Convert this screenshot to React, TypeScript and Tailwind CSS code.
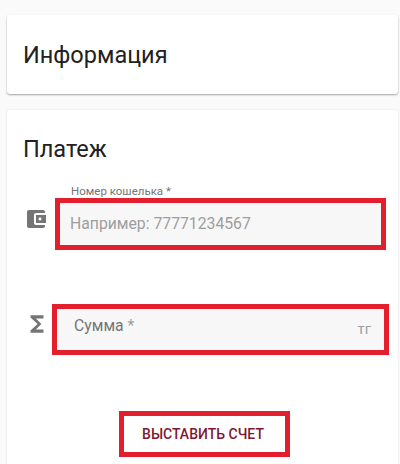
const font = { fontFamily: 'Roboto, sans-serif' }

function WalletIcon() {
  return (
    <svg viewBox="0 0 24 24" className="w-6 h-6 shrink-0 fill-[#757575]">
      <path d="M21 18v1c0 1.1-.9 2-2 2H5c-1.11 0-2-.9-2-2V5c0-1.1.89-2 2-2h14c1.1 0 2 .9 2 2v1h-9c-1.11 0-2 .9-2 2v8c0 1.1.89 2 2 2h9zm-9-2h10V8H12v8zm4-2.5c-.83 0-1.5-.67-1.5-1.5s.67-1.5 1.5-1.5 1.5.67 1.5 1.5-.67 1.5-1.5 1.5z" />
    </svg>
  )
}

function SigmaIcon() {
  return (
    <svg viewBox="0 0 24 24" className="w-[26px] h-[26px] shrink-0 fill-[#757575]">
      <path d="M18 4H6v2l6.5 6L6 18v2h12v-3h-7l5-5-5-5h7z" />
    </svg>
  )
}

export default function App() {
  return (
    <div className="h-[464px] overflow-hidden bg-[#fafafa] pl-[7px] pr-[2px] pt-[15px] flex flex-col gap-4" style={font}>
      <div className="h-[79px] shrink-0 bg-white rounded-[3px] shadow-[0_1px_2px_rgba(0,0,0,0.35)] pl-4 flex items-center">
        <h2 className="text-[23.5px] leading-8 text-[#212121]">Информация</h2>
      </div>
      <div className="flex-1 bg-white rounded-t-[3px] shadow-[0_0_2px_rgba(0,0,0,0.12)] pl-4 pt-[23px]">
        <h2 className="text-[23.5px] leading-8 text-[#212121]">Платеж</h2>

        <div className="mt-[19px] flex items-end">
          <div className="ml-px mr-[7px] mb-[19px]"><WalletIcon /></div>
          <div>
            <div className="pl-4 h-[14px] text-[11.5px] leading-[14px] text-[#757575]">Номер кошелька *</div>
            <div className="w-[331px] h-[52px] border-[5px] border-[#e31e2d] bg-[#f7f7f7] pl-2.5 flex items-center text-[15.75px] text-[#9e9e9e]">
              Например: 77771234567
            </div>
          </div>
        </div>

        <div className="mt-[54px] flex items-start">
          <div className="ml-px mr-[2px] mt-[7px]"><SigmaIcon /></div>
          <div className="w-[337px] h-[51px] border-[5px] border-[#e31e2d] bg-[#f7f7f7] pl-[17px] pr-[13px] flex justify-between text-[#757575]">
            <span className="text-[15.75px] mt-[5px]">Сумма <span className="text-[#9e9e9e]">*</span></span>
            <span className="text-[15px] mt-[9px] text-[#9e9e9e]">тг</span>
          </div>
        </div>

        <button type="button" className="mt-14 ml-[96px] w-[171px] h-[46px] border-[5px] border-[#e31e2d] bg-white pr-[3px] text-[14px] font-medium text-[#7f1733] flex items-center justify-center">
          ВЫСТАВИТЬ СЧЕТ
        </button>
      </div>
    </div>
  )
}
